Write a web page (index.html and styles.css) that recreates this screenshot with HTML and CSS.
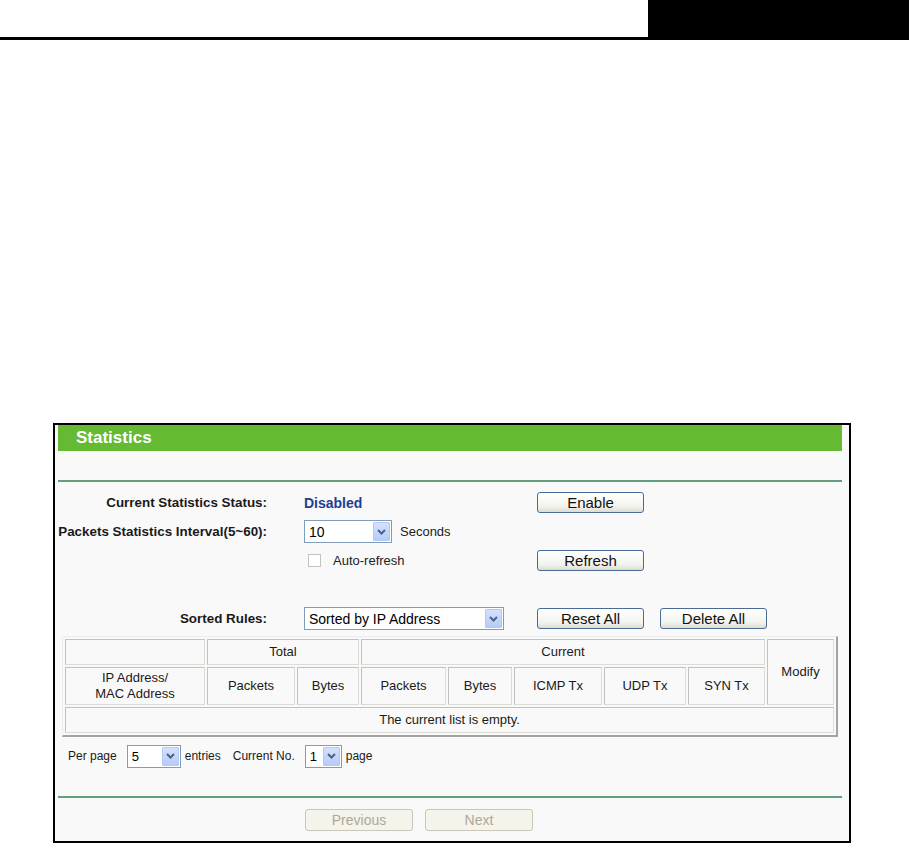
FILE: index.html
```html
<!DOCTYPE html>
<html lang="en">
<head>
<meta charset="utf-8">
<title>Statistics</title>
<link rel="stylesheet" href="styles.css">
</head>
<body>
<header class="doc-head">
  <div class="rule"></div>
  <div class="tab"></div>
</header>

<section class="panel">
  <div class="panel-inner">
    <h1 class="title">Statistics</h1>
    <div class="gap-top"></div>
    <div class="line"></div>

    <div class="form">
      <div class="row">
        <span class="label">Current Statistics Status:</span>
        <span class="value"><b class="status">Disabled</b></span>
        <button class="btn">Enable</button>
      </div>
      <div class="row">
        <span class="label">Packets Statistics Interval(5~60):</span>
        <span class="value">
          <span class="select sel-interval"><span class="val">10</span><span class="arrow"><svg width="9" height="6" viewBox="0 0 9 6"><polyline points="1,1 4.5,4.5 8,1" fill="none" stroke="#4d6185" stroke-width="2"/></svg></span></span>
          <span class="unit">Seconds</span>
        </span>
      </div>
      <div class="row">
        <span class="label"></span>
        <span class="value">
          <span class="check"></span>
          <span class="check-label">Auto-refresh</span>
        </span>
        <button class="btn">Refresh</button>
      </div>
      <div class="row row-sorted">
        <span class="label">Sorted Rules:</span>
        <span class="value">
          <span class="select sel-sort"><span class="val">Sorted by IP Address</span><span class="arrow"><svg width="9" height="6" viewBox="0 0 9 6"><polyline points="1,1 4.5,4.5 8,1" fill="none" stroke="#4d6185" stroke-width="2"/></svg></span></span>
        </span>
        <button class="btn">Reset All</button>
        <button class="btn btn-gap">Delete All</button>
      </div>
    </div>

    <table class="stats">
      <colgroup>
        <col class="c1"><col class="c2"><col class="c3"><col class="c4"><col class="c5"><col class="c6"><col class="c7"><col class="c8"><col class="c9">
      </colgroup>
      <tr class="r1">
        <td></td>
        <td colspan="2">Total</td>
        <td colspan="5">Current</td>
        <td rowspan="2">Modify</td>
      </tr>
      <tr class="r2">
        <td>IP Address/<br>MAC Address</td>
        <td>Packets</td>
        <td>Bytes</td>
        <td>Packets</td>
        <td>Bytes</td>
        <td>ICMP Tx</td>
        <td>UDP Tx</td>
        <td>SYN Tx</td>
      </tr>
      <tr class="r3">
        <td colspan="9">The current list is empty.</td>
      </tr>
    </table>

    <div class="pager">
      <span class="p-text">Per page</span>
      <span class="select sel-per"><span class="val">5</span><span class="arrow"><svg width="9" height="6" viewBox="0 0 9 6"><polyline points="1,1 4.5,4.5 8,1" fill="none" stroke="#4d6185" stroke-width="2"/></svg></span></span>
      <span class="p-text p-entries">entries</span>
      <span class="p-text p-cur">Current No.</span>
      <span class="select sel-no"><span class="val">1</span><span class="arrow"><svg width="9" height="6" viewBox="0 0 9 6"><polyline points="1,1 4.5,4.5 8,1" fill="none" stroke="#4d6185" stroke-width="2"/></svg></span></span>
      <span class="p-text p-page">page</span>
    </div>

    <div class="line line-bottom"></div>

    <div class="nav">
      <button class="btn btn-disabled" disabled>Previous</button>
      <button class="btn btn-disabled" disabled>Next</button>
    </div>
  </div>
</section>
</body>
</html>
```

FILE: styles.css
```css
* { box-sizing: border-box; }

html, body {
  margin: 0;
  padding: 0;
  background: #ffffff;
}

body {
  width: 909px;
  height: 843px;
  overflow: hidden;
  font-family: "Liberation Sans", Arial, sans-serif;
  color: #000;
}

.doc-head {
  display: flex;
  height: 40px;
}

.doc-head .rule {
  flex: 1;
  border-bottom: 3px solid #000;
}

.doc-head .tab {
  width: 261px;
  background: #000;
}

.panel {
  margin: 383px 0 0 53px;
  width: 798px;
  height: 420px;
  border: 2px solid #000;
  background: #f9f9f9;
}

.panel-inner {
  padding-left: 3px;
  width: 787px;
}

.title {
  margin: 0;
  height: 26px;
  line-height: 26px;
  padding-left: 18px;
  background: #66b933;
  color: #fff;
  font-size: 17px;
  font-weight: bold;
}

.gap-top {
  height: 29px;
}

.line {
  height: 2px;
  background: #639f7e;
  width: 784px;
}

.form {
  padding-top: 6px;
}

.row {
  display: flex;
  align-items: center;
  height: 29px;
}

.row-sorted {
  margin-top: 29px;
}

.label {
  width: 209px;
  margin-right: 37px;
  text-align: right;
  font-weight: bold;
  font-size: 13.4px;
  color: #1a1a1a;
}

.value {
  width: 233px;
  display: flex;
  align-items: center;
  font-size: 13px;
  color: #222;
}

.status {
  color: #1c3f94;
  font-size: 14px;
}

.unit {
  margin-left: 8px;
}

.check {
  width: 13px;
  height: 13px;
  margin-left: 4px;
  border: 1px solid #c4c4bc;
  background: #fff;
}

.check-label {
  margin-left: 12px;
}

/* XP-like select */
.select {
  display: inline-flex;
  align-items: stretch;
  height: 23px;
  border: 1px solid #7f9db9;
  background: #fff;
  font-size: 14px;
  color: #000;
}

.select .val {
  flex: 1;
  display: flex;
  align-items: center;
  padding-left: 4px;
  white-space: nowrap;
  overflow: hidden;
}

.select .arrow {
  width: 17px;
  margin: 1px;
  display: flex;
  align-items: center;
  justify-content: center;
  background: linear-gradient(#d4e1fd, #b6cbf8);
  border: 1px solid #b3c8f4;
  border-radius: 1px;
}

.sel-interval { width: 88px; }
.sel-sort { width: 200px; }
.sel-per { width: 54px; font-size: 13px; }
.sel-no { width: 37px; font-size: 13px; }

.btn {
  width: 107px;
  height: 21px;
  padding: 0;
  border: 1px solid #4a6b98;
  border-radius: 3px;
  background: linear-gradient(#ffffff, #f3f3ee 70%, #dedcd2);
  font-family: "Liberation Sans", Arial, sans-serif;
  font-size: 15px;
  line-height: 19px;
  color: #111;
}

.btn-gap {
  margin-left: 16px;
}

/* table */
.stats {
  margin: 3px 0 0 4px;
  width: 776px;
  table-layout: fixed;
  border-collapse: separate;
  border-spacing: 2px;
  border-style: solid;
  border-width: 1px 2px 2px 1px;
  border-color: #ececec #a3a3a0 #a3a3a0 #ececec;
  font-size: 13px;
  color: #1a1a1a;
}

.stats td {
  border: 1px solid;
  border-color: #c2c2ba #dcdcd5 #dcdcd5 #c2c2ba;
  text-align: center;
  padding: 0;
  line-height: 16px;
}

.stats .c1 { width: 140px; }
.stats .c2 { width: 88px; }
.stats .c3 { width: 62px; }
.stats .c4 { width: 85px; }
.stats .c5 { width: 64px; }
.stats .c6 { width: 88px; }
.stats .c7 { width: 82px; }
.stats .c8 { width: 77px; }
.stats .c9 { width: 67px; }

.stats .r1 td { height: 26px; }
.stats .r2 td { height: 38px; }
.stats .r3 td { height: 26px; }

/* pager */
.pager {
  display: flex;
  align-items: center;
  height: 26px;
  margin-top: 6px;
  padding-left: 10px;
  font-size: 12px;
  color: #1a1a1a;
}

.sel-per { margin-left: 10px; }
.p-entries { margin-left: 4px; }
.p-cur { margin-left: 12px; }
.sel-no { margin-left: 10px; }
.p-page { margin-left: 4px; }

.line-bottom {
  margin-top: 27px;
}

.nav {
  display: flex;
  margin-top: 11px;
  padding-left: 247px;
}

.nav .btn + .btn {
  margin-left: 12px;
}

.btn-disabled {
  width: 108px;
  height: 22px;
  border-color: #c9c7ba;
  background: #f5f4ea;
  color: #aca899;
  font-size: 14px;
}
```
